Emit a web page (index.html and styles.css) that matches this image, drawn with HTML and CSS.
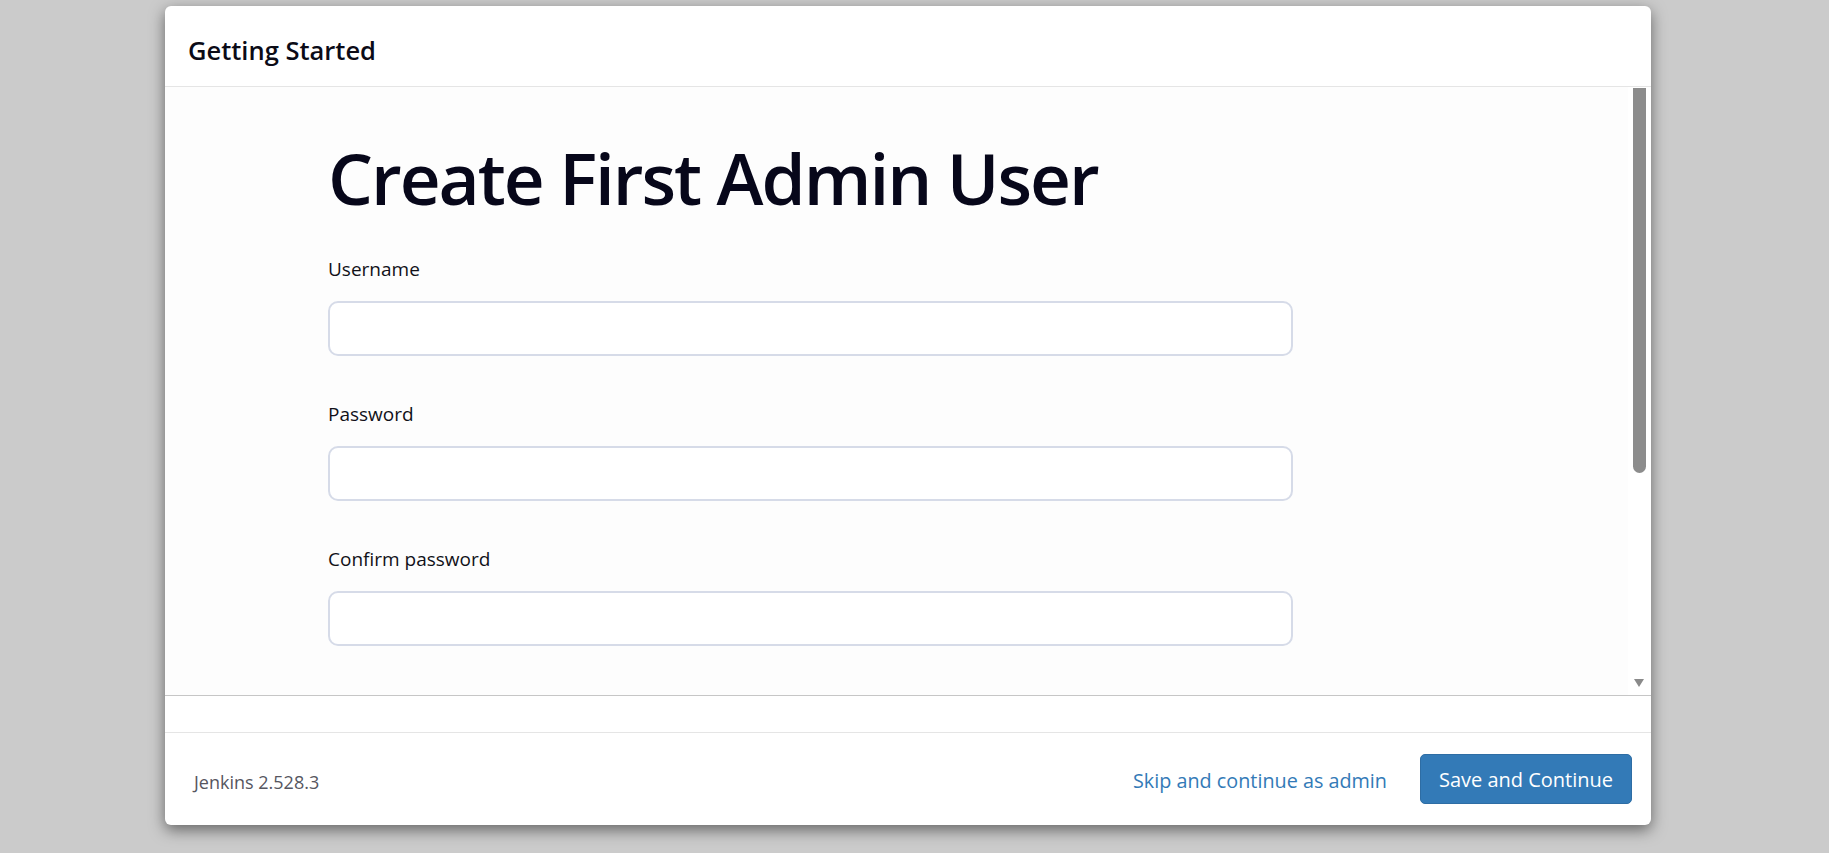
FILE: index.html
```html
<!DOCTYPE html>
<html lang="en">
<head>
<meta charset="utf-8">
<title>Getting Started</title>
<link rel="stylesheet" href="styles.css">
</head>
<body>
<div class="modal">
  <div class="modal-header">
    <h4 class="modal-title">Getting Started</h4>
  </div>
  <div class="modal-body">
    <div class="frame">
      <div class="frame-content">
        <h1 class="page-title">Create First Admin User</h1>
        <div class="field">
          <label class="field-label" for="username">Username</label>
          <input class="field-input" id="username" type="text">
        </div>
        <div class="field">
          <label class="field-label" for="password1">Password</label>
          <input class="field-input" id="password1" type="password">
        </div>
        <div class="field">
          <label class="field-label" for="password2">Confirm password</label>
          <input class="field-input" id="password2" type="password">
        </div>
      </div>
      <div class="scrollbar">
        <div class="scroll-thumb"></div>
        <div class="scroll-rest"></div>
        <div class="scroll-arrow"></div>
      </div>
    </div>
    <div class="band"></div>
  </div>
  <div class="modal-footer">
    <span class="version">Jenkins 2.528.3</span>
    <span class="footer-spacer"></span>
    <a class="skip-link" href="#">Skip and continue as admin</a>
    <button class="btn-primary" type="button">Save and Continue</button>
  </div>
</div>
</body>
</html>
```

FILE: styles.css
```css
html, body {
  margin: 0;
  padding: 0;
}

body {
  background: #cbcbcb;
  width: 1829px;
  height: 853px;
  overflow: hidden;
  font-family: "Open Sans", "Noto Sans", "Liberation Sans", sans-serif;
  padding-top: 6px;
  box-sizing: border-box;
}

.modal {
  margin-left: 165px;
  width: 1486px;
  height: 819px;
  background: #ffffff;
  border-radius: 6px;
  box-shadow: 0 5px 15px rgba(0, 0, 0, 0.5);
  display: flex;
  flex-direction: column;
  overflow: hidden;
}

.modal-header {
  height: 81px;
  box-sizing: border-box;
  padding: 27px 23px 0 23px;
  border-bottom: 1px solid #e5e5e5;
  flex: none;
}

.modal-title {
  margin: 0;
  font-size: 25.5px;
  line-height: 34px;
  font-weight: 600;
  color: #0b0b17;
}

.modal-body {
  flex: none;
  display: flex;
  flex-direction: column;
}

.frame {
  height: 609px;
  box-sizing: border-box;
  border-bottom: 1px solid #c6c6c6;
  display: flex;
  background: #fdfdfd;
}

.frame-content {
  flex: 1;
  overflow: hidden;
  padding: 48px 0 0 163px;
}

.page-title {
  margin: 0 0 35px 0;
  font-size: 71px;
  line-height: 86px;
  font-weight: 600;
  letter-spacing: -2px;
  color: #07071a;
}

.field {
  display: flex;
  flex-direction: column;
  align-items: flex-start;
  margin-bottom: 45px;
}

.field-label {
  font-size: 19px;
  line-height: 27px;
  color: #111118;
  margin-bottom: 18px;
}

.field-input {
  width: 965px;
  height: 55px;
  box-sizing: border-box;
  border: 2px solid #d6dbe8;
  border-radius: 10px;
  background: #ffffff;
  margin: 0;
  padding: 0 14px;
  font-family: inherit;
  font-size: 19px;
  outline: none;
}

.scrollbar {
  width: 23px;
  flex: none;
  background: #ffffff;
  display: flex;
  flex-direction: column;
  align-items: flex-start;
  padding-top: 1px;
  box-sizing: border-box;
}

.scroll-thumb {
  width: 13px;
  height: 385px;
  margin-left: 5px;
  background: #8c8c8c;
  border-radius: 0 0 7px 7px;
}

.scroll-rest {
  flex: 1;
}

.scroll-arrow {
  width: 0;
  height: 0;
  margin: 0 0 8px 6px;
  border-left: 5.5px solid transparent;
  border-right: 5.5px solid transparent;
  border-top: 8px solid #8a8a8a;
}

.band {
  height: 36px;
  border-bottom: 1px solid #e5e5e5;
  background: #ffffff;
}

.modal-footer {
  flex: 1;
  display: flex;
  align-items: center;
  padding: 0 19px 0 29px;
}

.version {
  font-size: 18px;
  color: #56565f;
  padding-top: 6px;
}

.footer-spacer {
  flex: 1;
}

.skip-link {
  font-size: 19.8px;
  color: #337ab7;
  text-decoration: none;
  padding-top: 2px;
}

.btn-primary {
  margin-left: 33px;
  width: 212px;
  height: 50px;
  box-sizing: border-box;
  background: #337ab7;
  border: 1px solid #2e6da4;
  border-radius: 5px;
  color: #ffffff;
  font-family: inherit;
  font-size: 20px;
  padding: 0;
  cursor: pointer;
}
```
